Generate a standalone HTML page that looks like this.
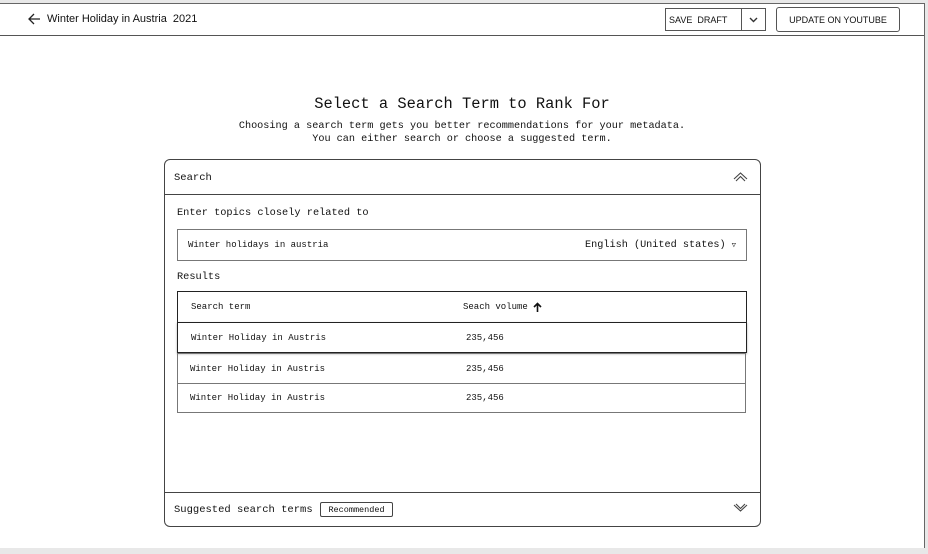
<!DOCTYPE html>
<html><head><style>
*{box-sizing:border-box;margin:0;padding:0}
body{width:928px;height:554px;background:#fff;position:relative;overflow:hidden;font-family:"Liberation Mono","DejaVu Sans Mono",monospace;color:#111}
.abs{position:absolute}
.sans{font-family:"Liberation Sans",Arial,sans-serif}
.row{position:absolute;border:1px solid #555;display:flex;align-items:center;font-size:9px}
</style></head><body>
<div class="abs" style="left:0;top:0;width:928px;height:3px;background:#e8e8e8"></div>
<div class="abs" style="left:0;top:3px;width:925px;height:1px;background:#666"></div>
<div class="abs" style="left:924px;top:3px;width:1px;height:546px;background:#666"></div>
<div class="abs" style="left:925px;top:0;width:3px;height:554px;background:#e8e8e8"></div>
<div class="abs" style="left:0;top:35px;width:924px;height:1px;background:#555"></div>
<div class="abs" style="left:0;top:548px;width:928px;height:6px;background:#e8e8e8"></div>

<svg class="abs" style="left:28px;top:13px" width="13" height="12" viewBox="0 0 13 12"><path d="M6 1L1 6l5 5M1 6h11" fill="none" stroke="#222" stroke-width="1.3"/></svg>
<div class="abs sans" style="left:47px;top:13px;font-size:11px">Winter Holiday in Austria&nbsp; 2021</div>

<div class="abs sans" style="left:665px;top:8px;width:101px;height:23px;border:1px solid #555;font-size:9px;display:flex;align-items:center">
<span style="padding-left:3px;width:75px">SAVE&nbsp; DRAFT</span>
<span style="border-left:1px solid #555;height:100%;flex:1;display:flex;align-items:center;justify-content:center"><svg width="9" height="6"><path d="M1 1l3.5 3.5L8 1" fill="none" stroke="#333" stroke-width="1.4"/></svg></span></div>
<div class="abs sans" style="left:776px;top:7px;width:124px;height:25px;border:1px solid #555;border-radius:3px;font-size:9px;display:flex;align-items:center;justify-content:center">UPDATE ON YOUTUBE</div>

<div class="abs" style="left:0;top:95px;width:924px;text-align:center;font-size:15.4px">Select a Search Term to Rank For</div>
<div class="abs" style="left:0;top:120px;width:924px;text-align:center;font-size:10.2px;line-height:13px">Choosing a search term gets you better recommendations for your metadata.<br>You can either search or choose a suggested term.</div>

<div class="abs" style="left:164px;top:159px;width:597px;height:368px;border:1px solid #444;border-radius:6px"></div>
<div class="abs" style="left:164px;top:194px;width:597px;height:1px;background:#444"></div>
<div class="abs" style="left:174px;top:172px;font-size:10.5px">Search</div>
<svg class="abs" style="left:733px;top:171px" width="15" height="11"><path d="M1 8L7.5 2 14 8M3 10L7.5 5.5 12 10" fill="none" stroke="#444" stroke-width="1.1"/></svg>
<div class="abs" style="left:177px;top:207px;font-size:10.3px">Enter topics closely related to</div>
<div class="row" style="left:177px;top:229px;width:570px;height:32px;border-color:#777;justify-content:space-between;padding:0 10px">
<span>Winter holidays in austria</span><span style="font-size:10.2px">English (United states) <span style="font-size:7px">▽</span></span></div>
<div class="abs" style="left:177px;top:271px;font-size:10.3px">Results</div>

<div class="row" style="left:177px;top:291px;width:570px;height:32px;border-color:#222"><span style="position:absolute;left:13px">Search term</span><span style="position:absolute;left:285px;display:flex;align-items:center">Seach volume&nbsp;<svg width="9" height="10"><path d="M4.5 10V1.5M1 5l3.5-3.5L8 5" fill="none" stroke="#111" stroke-width="1.6"/></svg></span></div>
<div class="row" style="left:177px;top:322px;width:570px;height:31px;border-color:#222;box-shadow:0 1px 2px #aaa"><span style="position:absolute;left:13px">Winter Holiday in Austris</span><span style="position:absolute;left:288px">235,456</span></div>
<div class="row" style="left:177px;top:353px;width:569px;height:31px;border-color:#777"><span style="position:absolute;left:12px">Winter Holiday in Austris</span><span style="position:absolute;left:288px">235,456</span></div>
<div class="row" style="left:177px;top:383px;width:569px;height:30px;border-color:#777"><span style="position:absolute;left:12px">Winter Holiday in Austris</span><span style="position:absolute;left:288px">235,456</span></div>

<div class="abs" style="left:164px;top:492px;width:597px;height:1px;background:#444"></div>
<div class="abs" style="left:174px;top:504px;font-size:10.5px">Suggested search terms</div>
<div class="abs" style="left:320px;top:502px;width:73px;height:15px;border:1px solid #444;border-radius:2px;font-size:8.5px;display:flex;align-items:center;justify-content:center">Recommended</div>
<svg class="abs" style="left:733px;top:503px" width="15" height="11"><path d="M1 2L7.5 8 14 2M3 1L7.5 5.5 12 1" fill="none" stroke="#444" stroke-width="1.1"/></svg>
</body></html>
